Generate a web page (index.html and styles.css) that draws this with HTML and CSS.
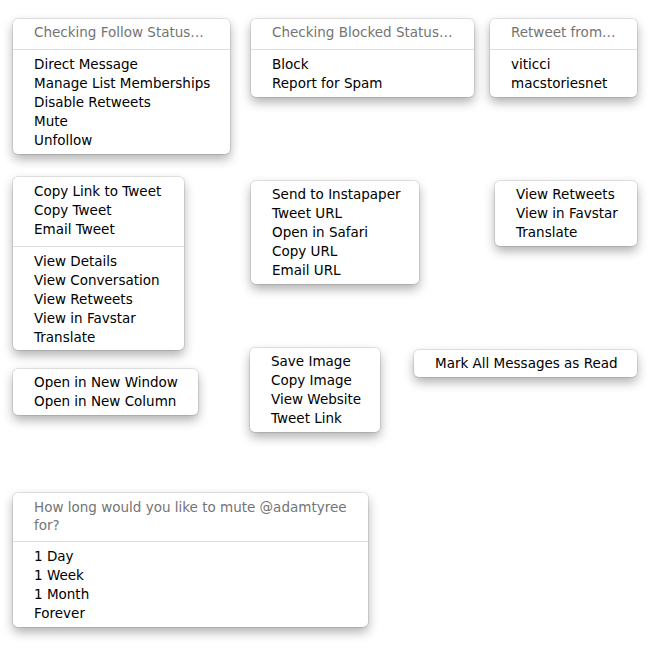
FILE: index.html
```html
<!DOCTYPE html>
<html>
<head>
<meta charset="utf-8">
<link rel="stylesheet" href="styles.css">
</head>
<body>
<div class="canvas">
  <div class="menu m1">
    <div class="header">Checking Follow Status…</div>
    <div class="sep"></div>
    <div class="item">Direct Message</div>
    <div class="item">Manage List Memberships</div>
    <div class="item">Disable Retweets</div>
    <div class="item">Mute</div>
    <div class="item">Unfollow</div>
  </div>
  <div class="menu m2">
    <div class="header">Checking Blocked Status…</div>
    <div class="sep"></div>
    <div class="item">Block</div>
    <div class="item">Report for Spam</div>
  </div>
  <div class="menu m3">
    <div class="header">Retweet from…</div>
    <div class="sep"></div>
    <div class="item">viticci</div>
    <div class="item">macstoriesnet</div>
  </div>
  <div class="menu m4">
    <div class="item">Copy Link to Tweet</div>
    <div class="item">Copy Tweet</div>
    <div class="item">Email Tweet</div>
    <div class="sep"></div>
    <div class="item">View Details</div>
    <div class="item">View Conversation</div>
    <div class="item">View Retweets</div>
    <div class="item">View in Favstar</div>
    <div class="item">Translate</div>
  </div>
  <div class="menu m5">
    <div class="item">Open in New Window</div>
    <div class="item">Open in New Column</div>
  </div>
  <div class="menu m6">
    <div class="item">Send to Instapaper</div>
    <div class="item">Tweet URL</div>
    <div class="item">Open in Safari</div>
    <div class="item">Copy URL</div>
    <div class="item">Email URL</div>
  </div>
  <div class="menu m7">
    <div class="item">View Retweets</div>
    <div class="item">View in Favstar</div>
    <div class="item">Translate</div>
  </div>
  <div class="menu m8">
    <div class="item">Save Image</div>
    <div class="item">Copy Image</div>
    <div class="item">View Website</div>
    <div class="item">Tweet Link</div>
  </div>
  <div class="menu m9">
    <div class="item">Mark All Messages as Read</div>
  </div>
  <div class="menu m10">
    <div class="header two">How long would you like to mute @adamtyree<br>for?</div>
    <div class="sep"></div>
    <div class="item">1 Day</div>
    <div class="item">1 Week</div>
    <div class="item">1 Month</div>
    <div class="item">Forever</div>
  </div>
</div>
</body>
</html>
```
FILE: styles.css
```css
html, body {
  margin: 0;
  padding: 0;
  background: #ffffff;
}
body {
  font-family: "DejaVu Sans", "Liberation Sans", sans-serif;
  font-size: 13.5px;
  line-height: 19px;
  color: #000000;
}
.canvas {
  position: relative;
  width: 650px;
  height: 650px;
}
.menu {
  position: absolute;
  box-sizing: border-box;
  background: #ffffff;
  border-radius: 5px;
  padding: 4px 0 4px;
  box-shadow: 0 0 0 1px rgba(0,0,0,0.09), 0 5px 11px rgba(0,0,0,0.32);
}
.item, .header {
  padding: 0 12px 0 21px;
  white-space: nowrap;
}
.header {
  color: #747474;
}
.header.two {
  line-height: 18px;
  padding-top: 1px;
}
.sep {
  height: 1px;
  background: #dedede;
  margin: 7px 0 5px;
}
.m1 { left: 13px; top: 19px; width: 217px; }
.m2 { left: 251px; top: 19px; width: 223px; }
.m3 { left: 490px; top: 19px; width: 147px; }
.m4 { left: 13px; top: 177px; width: 171px; padding-top: 5px; padding-bottom: 3px; }
.m5 { left: 13px; top: 369px; width: 185px; }
.m6 { left: 251px; top: 181px; width: 168px; }
.m7 { left: 495px; top: 181px; width: 142px; }
.m8 { left: 250px; top: 348px; width: 130px; }
.m9 { left: 414px; top: 350px; width: 223px; }
.m10 { left: 13px; top: 493px; width: 355px; }
```
